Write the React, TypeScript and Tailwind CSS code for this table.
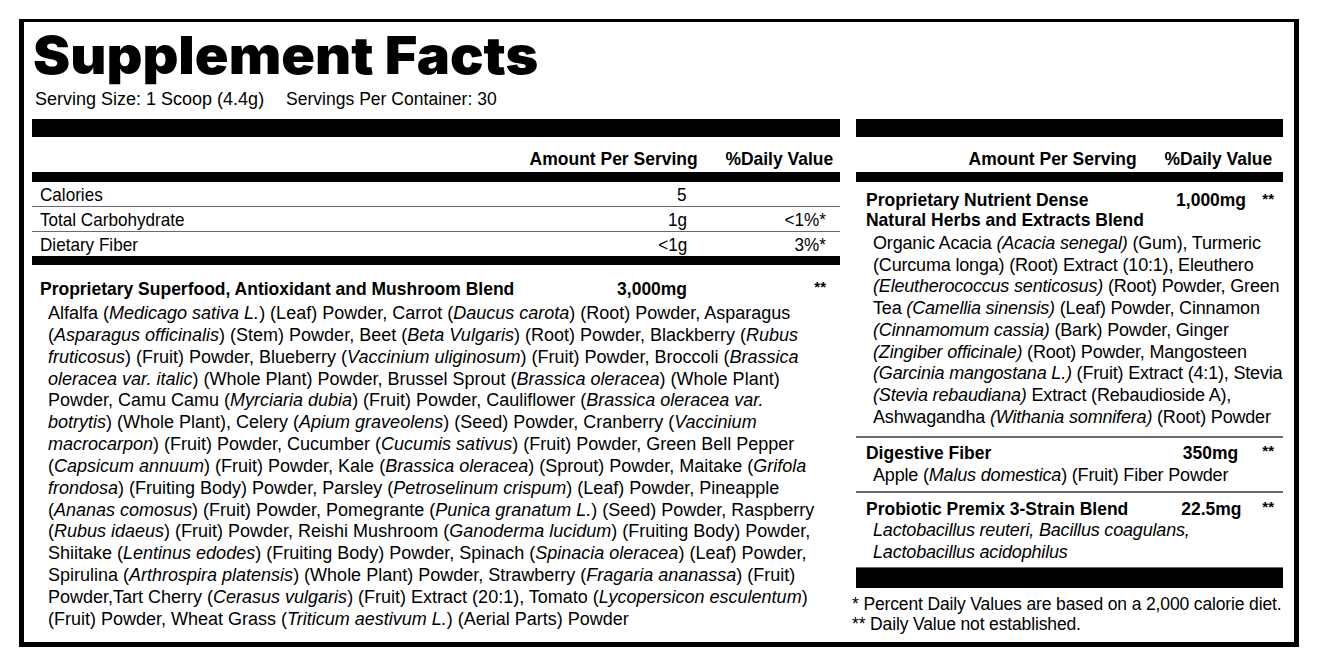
const arial = "font-['Liberation_Sans',Arial,sans-serif]";

// lines are split on "_" : odd pieces are italic
function Line({ text, className = '' }: { text: string; className?: string }) {
  return (
    <div className={`whitespace-nowrap ${className}`}>
      {text.split('_').map((part, i) =>
        i % 2 === 1 ? (
          <i key={i}>{part}</i>
        ) : (
          <span key={i}>{part}</span>
        ),
      )}
    </div>
  );
}

// condensed text: no narrow face is installed, so squeeze Liberation Sans
function Narrow({ children, right = false, bold = false }: { children: React.ReactNode; right?: boolean; bold?: boolean }) {
  return (
    <span
      className={`inline-block whitespace-nowrap ${right ? 'origin-right' : 'origin-left'} ${
        bold ? 'scale-x-[0.92]' : 'scale-x-[0.9]'
      }`}
    >
      {children}
    </span>
  );
}

const superfoodLines = [
  'Alfalfa (_Medicago sativa L._) (Leaf) Powder, Carrot (_Daucus carota_) (Root) Powder, Asparagus',
  '(_Asparagus officinalis_) (Stem) Powder, Beet (_Beta Vulgaris_) (Root) Powder, Blackberry (_Rubus_',
  '_fruticosus_) (Fruit) Powder, Blueberry (_Vaccinium uliginosum_) (Fruit) Powder, Broccoli (_Brassica_',
  '_oleracea var. italic_) (Whole Plant) Powder, Brussel Sprout (_Brassica oleracea_) (Whole Plant)',
  'Powder, Camu Camu (_Myrciaria dubia_) (Fruit) Powder, Cauliflower (_Brassica oleracea var._',
  '_botrytis_) (Whole Plant), Celery (_Apium graveolens_) (Seed) Powder, Cranberry (_Vaccinium_',
  '_macrocarpon_) (Fruit) Powder, Cucumber (_Cucumis sativus_) (Fruit) Powder, Green Bell Pepper',
  '(_Capsicum annuum_) (Fruit) Powder, Kale (_Brassica oleracea_) (Sprout) Powder, Maitake (_Grifola_',
  '_frondosa_) (Fruiting Body) Powder, Parsley (_Petroselinum crispum_) (Leaf) Powder, Pineapple',
  '(_Ananas comosus_) (Fruit) Powder, Pomegrante (_Punica granatum L._) (Seed) Powder, Raspberry',
  '(_Rubus idaeus_) (Fruit) Powder, Reishi Mushroom (_Ganoderma lucidum_) (Fruiting Body) Powder,',
  'Shiitake (_Lentinus edodes_) (Fruiting Body) Powder, Spinach (_Spinacia oleracea_) (Leaf) Powder,',
  'Spirulina (_Arthrospira platensis_) (Whole Plant) Powder, Strawberry (_Fragaria ananassa_) (Fruit)',
  'Powder,Tart Cherry (_Cerasus vulgaris_) (Fruit) Extract (20:1), Tomato (_Lycopersicon esculentum_)',
  '(Fruit) Powder, Wheat Grass (_Triticum aestivum L._) (Aerial Parts) Powder',
];

const herbLines = [
  'Organic Acacia _(Acacia senegal)_ (Gum), Turmeric',
  '(Curcuma longa) (Root) Extract (10:1), Eleuthero',
  '_(Eleutherococcus senticosus)_ (Root) Powder, Green',
  'Tea _(Camellia sinensis)_ (Leaf) Powder, Cinnamon',
  '_(Cinnamomum cassia)_ (Bark) Powder, Ginger',
  '_(Zingiber officinale)_ (Root) Powder, Mangosteen',
  '_(Garcinia mangostana L.)_ (Fruit) Extract (4:1), Stevia',
  '_(Stevia rebaudiana)_ Extract (Rebaudioside A),',
  'Ashwagandha _(Withania somnifera)_ (Root) Powder',
];

const nutrients = [
  { name: 'Calories', amount: '5', dv: '' },
  { name: 'Total Carbohydrate', amount: '1g', dv: '<1%*' },
  { name: 'Dietary Fiber', amount: '<1g', dv: '3%*' },
];

function ColumnHeader({ amountWidth }: { amountWidth: string }) {
  return (
    <>
      <div className="h-[18px] bg-black" />
      <div className={`flex h-[35px] items-end pb-[4px] text-[19px] font-bold leading-none ${arial}`}>
        <span className={`${amountWidth} text-right`}>
          <Narrow right bold>Amount Per Serving</Narrow>
        </span>
        <span className="w-[135px] text-right">
          <Narrow right bold>%Daily Value</Narrow>
        </span>
      </div>
      <div className="h-[10px] bg-black" />
    </>
  );
}

function BlendHead({
  name,
  amount,
  starWidth,
  className = '',
}: {
  name: React.ReactNode;
  amount: string;
  starWidth: string;
  className?: string;
}) {
  return (
    <div className={`flex text-[19px] font-bold ${arial} ${className}`}>
      <span className="flex-1">{name}</span>
      <span className="w-[100px] text-right">
        <Narrow right bold>{amount}</Narrow>
      </span>
      <span className={`${starWidth} text-right text-[15px] leading-[18px]`}>**</span>
    </div>
  );
}

export default function App() {
  return (
    <div className="h-[667px] w-[1320px] bg-white pl-[19px] pt-[19px] text-black">
      <div className="h-[628px] w-[1280px] border-x-[5px] border-b-[5px] border-t-[3px] border-black pl-[8px] pr-[11px]">
        <h1 className="mt-[8px] h-[52px] font-['Inter',sans-serif] text-[52px] font-black leading-none">
          <span className="inline-block origin-left scale-x-[1.072] pl-[1px]">Supplement Facts</span>
        </h1>
        <div className={`mt-[6px] flex gap-[22px] pl-[3px] text-[18px] leading-[22px] ${arial}`}>
          <span>Serving Size: 1 Scoop (4.4g)</span>
          <span className="inline-block origin-left scale-x-[0.975]">Servings Per Container: 30</span>
        </div>

        <div className="mt-[9px] flex gap-[16px]">
          {/* left panel */}
          <div className="w-[808px]">
            <ColumnHeader amountWidth="w-[666px]" />
            {nutrients.map((row, i) => (
              <div
                key={row.name}
                className={`flex items-center pl-[8px] pr-[14px] pt-[3px] text-[19px] ${arial} ${
                  i < nutrients.length - 1 ? 'h-[25px] border-b border-[#6b6b6b]' : 'h-[24px]'
                }`}
              >
                <span className="flex-1">
                  <Narrow>{row.name}</Narrow>
                </span>
                <span className="w-[100px] text-right">
                  <Narrow right>{row.amount}</Narrow>
                </span>
                <span className="w-[139px] text-right">
                  <Narrow right>{row.dv}</Narrow>
                </span>
              </div>
            ))}
            <div className="h-[9px] bg-black" />

            <BlendHead
              className="mt-[13px] pl-[8px] pr-[14px] leading-[22px]"
              name={<Narrow bold>Proprietary Superfood, Antioxidant and Mushroom Blend</Narrow>}
              amount="3,000mg"
              starWidth="w-[139px]"
            />
            <div className={`mt-[3px] pl-[16px] text-[18px] leading-[21.85px] ${arial}`}>
              {superfoodLines.map((line) => (
                <Line key={line} text={line} />
              ))}
            </div>
          </div>

          {/* right panel */}
          <div className="w-[427px]">
            <ColumnHeader amountWidth="w-[281px]" />

            <BlendHead
              className="mt-[8px] pl-[10px] pr-[9px] leading-[20px]"
              name={
                <>
                  <Narrow bold>Proprietary Nutrient Dense</Narrow>
                  <br />
                  <Narrow bold>Natural Herbs and Extracts Blend</Narrow>
                </>
              }
              amount="1,000mg"
              starWidth="w-[36px]"
            />
            <div className={`mt-[3px] pl-[17px] text-[18px] leading-[21.7px] tracking-[-0.01em] ${arial}`}>
              {herbLines.map((line) => (
                <Line key={line} text={line} />
              ))}
            </div>
            <div className="mt-[8px] h-[2px] bg-[#6b6b6b]" />

            <BlendHead
              className="mt-[4px] pl-[10px] pr-[9px] leading-[22px]"
              name={<Narrow bold>Digestive Fiber</Narrow>}
              amount="350mg"
              starWidth="w-[36px]"
            />
            <div className={`pl-[17px] text-[18px] leading-[22px] tracking-[-0.01em] ${arial}`}>
              <Line text="Apple (_Malus domestica_) (Fruit) Fiber Powder" />
            </div>
            <div className="mt-[5px] h-[2px] bg-[#6b6b6b]" />

            <BlendHead
              className="mt-[5px] pl-[10px] pr-[9px] leading-[22px]"
              name={<Narrow bold>Probiotic Premix 3-Strain Blend</Narrow>}
              amount="22.5mg"
              starWidth="w-[36px]"
            />
            <div className={`pl-[17px] text-[18px] leading-[21.5px] tracking-[-0.01em] ${arial}`}>
              <Line text="_Lactobacillus reuteri, Bacillus coagulans,_" />
              <Line text="_Lactobacillus acidophilus_" />
            </div>
            <div className="mt-[4px] h-[21px] border-t border-[#6b6b6b] bg-black" />

            <div className={`-ml-[4px] mt-[6px] text-[17.5px] leading-[20px] tracking-[-0.008em] ${arial}`}>
              <div>* Percent Daily Values are based on a 2,000 calorie diet.</div>
              <div>** Daily Value not established.</div>
            </div>
          </div>
        </div>
      </div>
    </div>
  );
}
